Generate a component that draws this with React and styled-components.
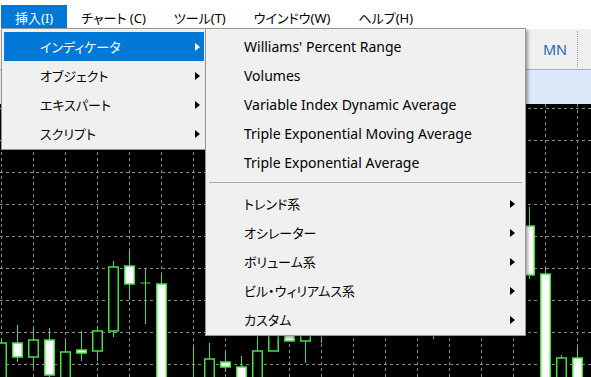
import React from 'react'
import styled, { createGlobalStyle } from 'styled-components'

const GlobalStyle = createGlobalStyle`
  html, body {
    margin: 0;
    padding: 0;
    background: #000;
  }
`

const CHART_TOP = 104
const GREEN = '#46e046'

const menuItems = [
  { label: '挿入(I)', active: true },
  { label: 'チャート (C)' },
  { label: 'ツール(T)' },
  { label: 'ウインドウ(W)' },
  { label: 'ヘルプ(H)' }
]

const insertItems = [
  { label: 'インディケータ', active: true },
  { label: 'オブジェクト' },
  { label: 'エキスパート' },
  { label: 'スクリプト' }
]

const recentIndicators = [
  "Williams' Percent Range",
  'Volumes',
  'Variable Index Dynamic Average',
  'Triple Exponential Moving Average',
  'Triple Exponential Average'
]

const indicatorGroups = ['トレンド系', 'オシレーター', 'ボリューム系', 'ビル・ウィリアムス系', 'カスタム']

// page coordinates: x = centre, wick = [top, bottom], body = [top, bottom]
const candles = [
  { x: 1.5, wick: [340, 400], body: [343, 400], bull: false },
  { x: 17.5, wick: [325, 362], body: [343, 357], bull: true },
  { x: 33.5, wick: [328, 368], body: [340, 357], bull: false },
  { x: 49.5, wick: [328, 400], body: [340, 375], bull: true },
  { x: 65.5, wick: [340, 400], body: [352, 400], bull: false },
  { x: 81.5, wick: [331, 361], body: [350, 353], bull: true },
  { x: 97.5, wick: [326, 361], body: [331, 351], bull: false },
  { x: 113.5, wick: [261, 337], body: [267, 331], bull: false },
  { x: 129.5, wick: [250, 300], body: [266, 284], bull: true },
  { x: 145.5, wick: [268, 324], body: [283, 283], bull: false },
  { x: 161.5, wick: [274, 400], body: [284, 400], bull: true },
  { x: 193.5, wick: [346, 400], body: [390, 400], bull: false },
  { x: 209.5, wick: [343, 400], body: [359, 400], bull: false },
  { x: 225.5, wick: [352, 372], body: [362, 367], bull: true },
  { x: 241.5, wick: [356, 400], body: [367, 400], bull: true },
  { x: 257.5, wick: [320, 400], body: [351, 400], bull: false },
  { x: 273.5, wick: [310, 351], body: [318, 351], bull: false },
  { x: 289.5, wick: [320, 341], body: [330, 341], bull: true },
  { x: 305.5, wick: [315, 363], body: [318, 341], bull: false },
  { x: 321.5, wick: [300, 343], body: [300, 300], bull: false, noBody: true },
  { x: 433.5, wick: [320, 339], body: [300, 300], bull: false, noBody: true },
  { x: 529.5, wick: [207, 279], body: [226, 275], bull: true },
  { x: 545.5, wick: [268, 400], body: [274, 400], bull: true },
  { x: 561.5, wick: [355, 400], body: [358, 400], bull: false },
  { x: 577.5, wick: [347, 400], body: [358, 400], bull: true }
]

const Screen = styled.div`
  position: relative;
  width: 591px;
  height: 377px;
  overflow: hidden;
  display: flex;
  flex-direction: column;
  background: #f0f0f0;
  font-family: "Noto Sans", "Noto Sans CJK JP", sans-serif;
  font-size: 14px;
  font-feature-settings: "palt";
  color: #000;
`

const MenuBar = styled.div`
  height: 29px;
  box-sizing: border-box;
  padding: 5px 0 0 1px;
  display: flex;
  background: #fff;
  font-size: 13px;
`

const MenuBarItem = styled.div`
  display: flex;
  align-items: center;
  padding: 0 14px;
  white-space: nowrap;
  color: ${props => (props.active ? '#fff' : '#000')};
  background: ${props => (props.active ? '#0078d7' : 'transparent')};
`

const Toolbar = styled.div`
  height: 41px;
  box-sizing: border-box;
  border-bottom: 1px solid #a9a9a9;
  display: flex;
  justify-content: flex-end;
  align-items: center;
  padding-right: 13px;
`

const TfButton = styled.div`
  width: 38px;
  text-align: center;
  color: #1c6bb0;
  font-size: 14.5px;
  margin-right: 3px;
`

const ToolSeparator = styled.div`
  width: 0;
  height: 36px;
  border-left: 1px dotted #9a9a9a;
`

const TabBand = styled.div`
  height: 34px;
  background: #dce9fa;
`

const ChartArea = styled.div`
  flex: 1;
  background: #000;
  svg {
    display: block;
  }
`

const Dropdown = styled.div`
  position: absolute;
  top: 28px;
  left: ${props => props.left}px;
  width: ${props => props.width}px;
  box-sizing: border-box;
  background: #f0f0f0;
  border: 1px solid #979797;
  padding: 3px 1px 1px 2px;
  box-shadow: 2px 2px 3px rgba(0, 0, 0, 0.35);
`

const DropItem = styled.div`
  height: 29px;
  display: flex;
  align-items: center;
  padding-left: 36px;
  padding-right: ${props => props.arrowGap}px;
  white-space: nowrap;
  font-size: ${props => (props.jp ? '13px' : '14px')};
  color: ${props => (props.active ? '#fff' : '#000')};
  background: ${props => (props.active ? '#0078d7' : 'transparent')};
`

const ItemLabel = styled.span`
  flex: 1;
`

const Arrow = styled.span`
  width: 0;
  height: 0;
  border-left: 5px solid ${props => (props.light ? '#fff' : '#000')};
  border-top: 4px solid transparent;
  border-bottom: 4px solid transparent;
`

const DropSeparator = styled.div`
  height: 1px;
  margin: 5px 2px 6px 1px;
  background: #a8a8a8;
`

function Chart () {
  const width = 591
  const height = 377 - CHART_TOP
  const vLines = []
  for (let x = 1.5; x < width; x += 32) vLines.push(x)
  const hLines = []
  for (let y = 108.5 - CHART_TOP; y < height; y += 32) hLines.push(y)

  return (
    <svg width={width} height={height} viewBox={`0 0 ${width} ${height}`}>
      {vLines.map(x => (
        <line key={'v' + x} x1={x} y1={0} x2={x} y2={height} stroke="#8c8c8c" strokeDasharray="3 3" />
      ))}
      {hLines.map(y => (
        <line key={'h' + y} x1={0} y1={y} x2={width} y2={y} stroke="#8c8c8c" strokeDasharray="3 3" />
      ))}
      {candles.map(c => {
        const top = c.body[0] - CHART_TOP
        const bottom = c.body[1] - CHART_TOP
        return (
          <g key={c.x}>
            <line
              x1={c.x} y1={c.wick[0] - CHART_TOP}
              x2={c.x} y2={c.wick[1] - CHART_TOP}
              stroke={GREEN} strokeWidth="1"
            />
            {!c.noBody && (
              bottom - top < 1
                ? <line x1={c.x - 5} y1={top} x2={c.x + 5} y2={top} stroke={GREEN} strokeWidth="1" />
                : <rect
                    x={c.x - 4.75} y={top}
                    width={9.5} height={bottom - top}
                    fill={c.bull ? '#fff' : '#000'}
                    stroke={GREEN} strokeWidth="1.5"
                  />
            )}
          </g>
        )
      })}
    </svg>
  )
}

export default function App () {
  return (
    <Screen>
      <GlobalStyle />
      <MenuBar>
        {menuItems.map(item => (
          <MenuBarItem key={item.label} active={item.active}>{item.label}</MenuBarItem>
        ))}
      </MenuBar>
      <Toolbar>
        <TfButton>MN</TfButton>
        <ToolSeparator />
      </Toolbar>
      <TabBand />
      <ChartArea>
        <Chart />
      </ChartArea>

      <Dropdown left={1} width={205}>
        {insertItems.map(item => (
          <DropItem key={item.label} jp active={item.active} arrowGap={4}>
            <ItemLabel>{item.label}</ItemLabel>
            <Arrow light={item.active} />
          </DropItem>
        ))}
      </Dropdown>

      <Dropdown left={205} width={321}>
        {recentIndicators.map(name => (
          <DropItem key={name} arrowGap={9}>
            <ItemLabel>{name}</ItemLabel>
          </DropItem>
        ))}
        <DropSeparator />
        {indicatorGroups.map(name => (
          <DropItem key={name} jp arrowGap={9}>
            <ItemLabel>{name}</ItemLabel>
            <Arrow />
          </DropItem>
        ))}
      </Dropdown>
    </Screen>
  )
}
